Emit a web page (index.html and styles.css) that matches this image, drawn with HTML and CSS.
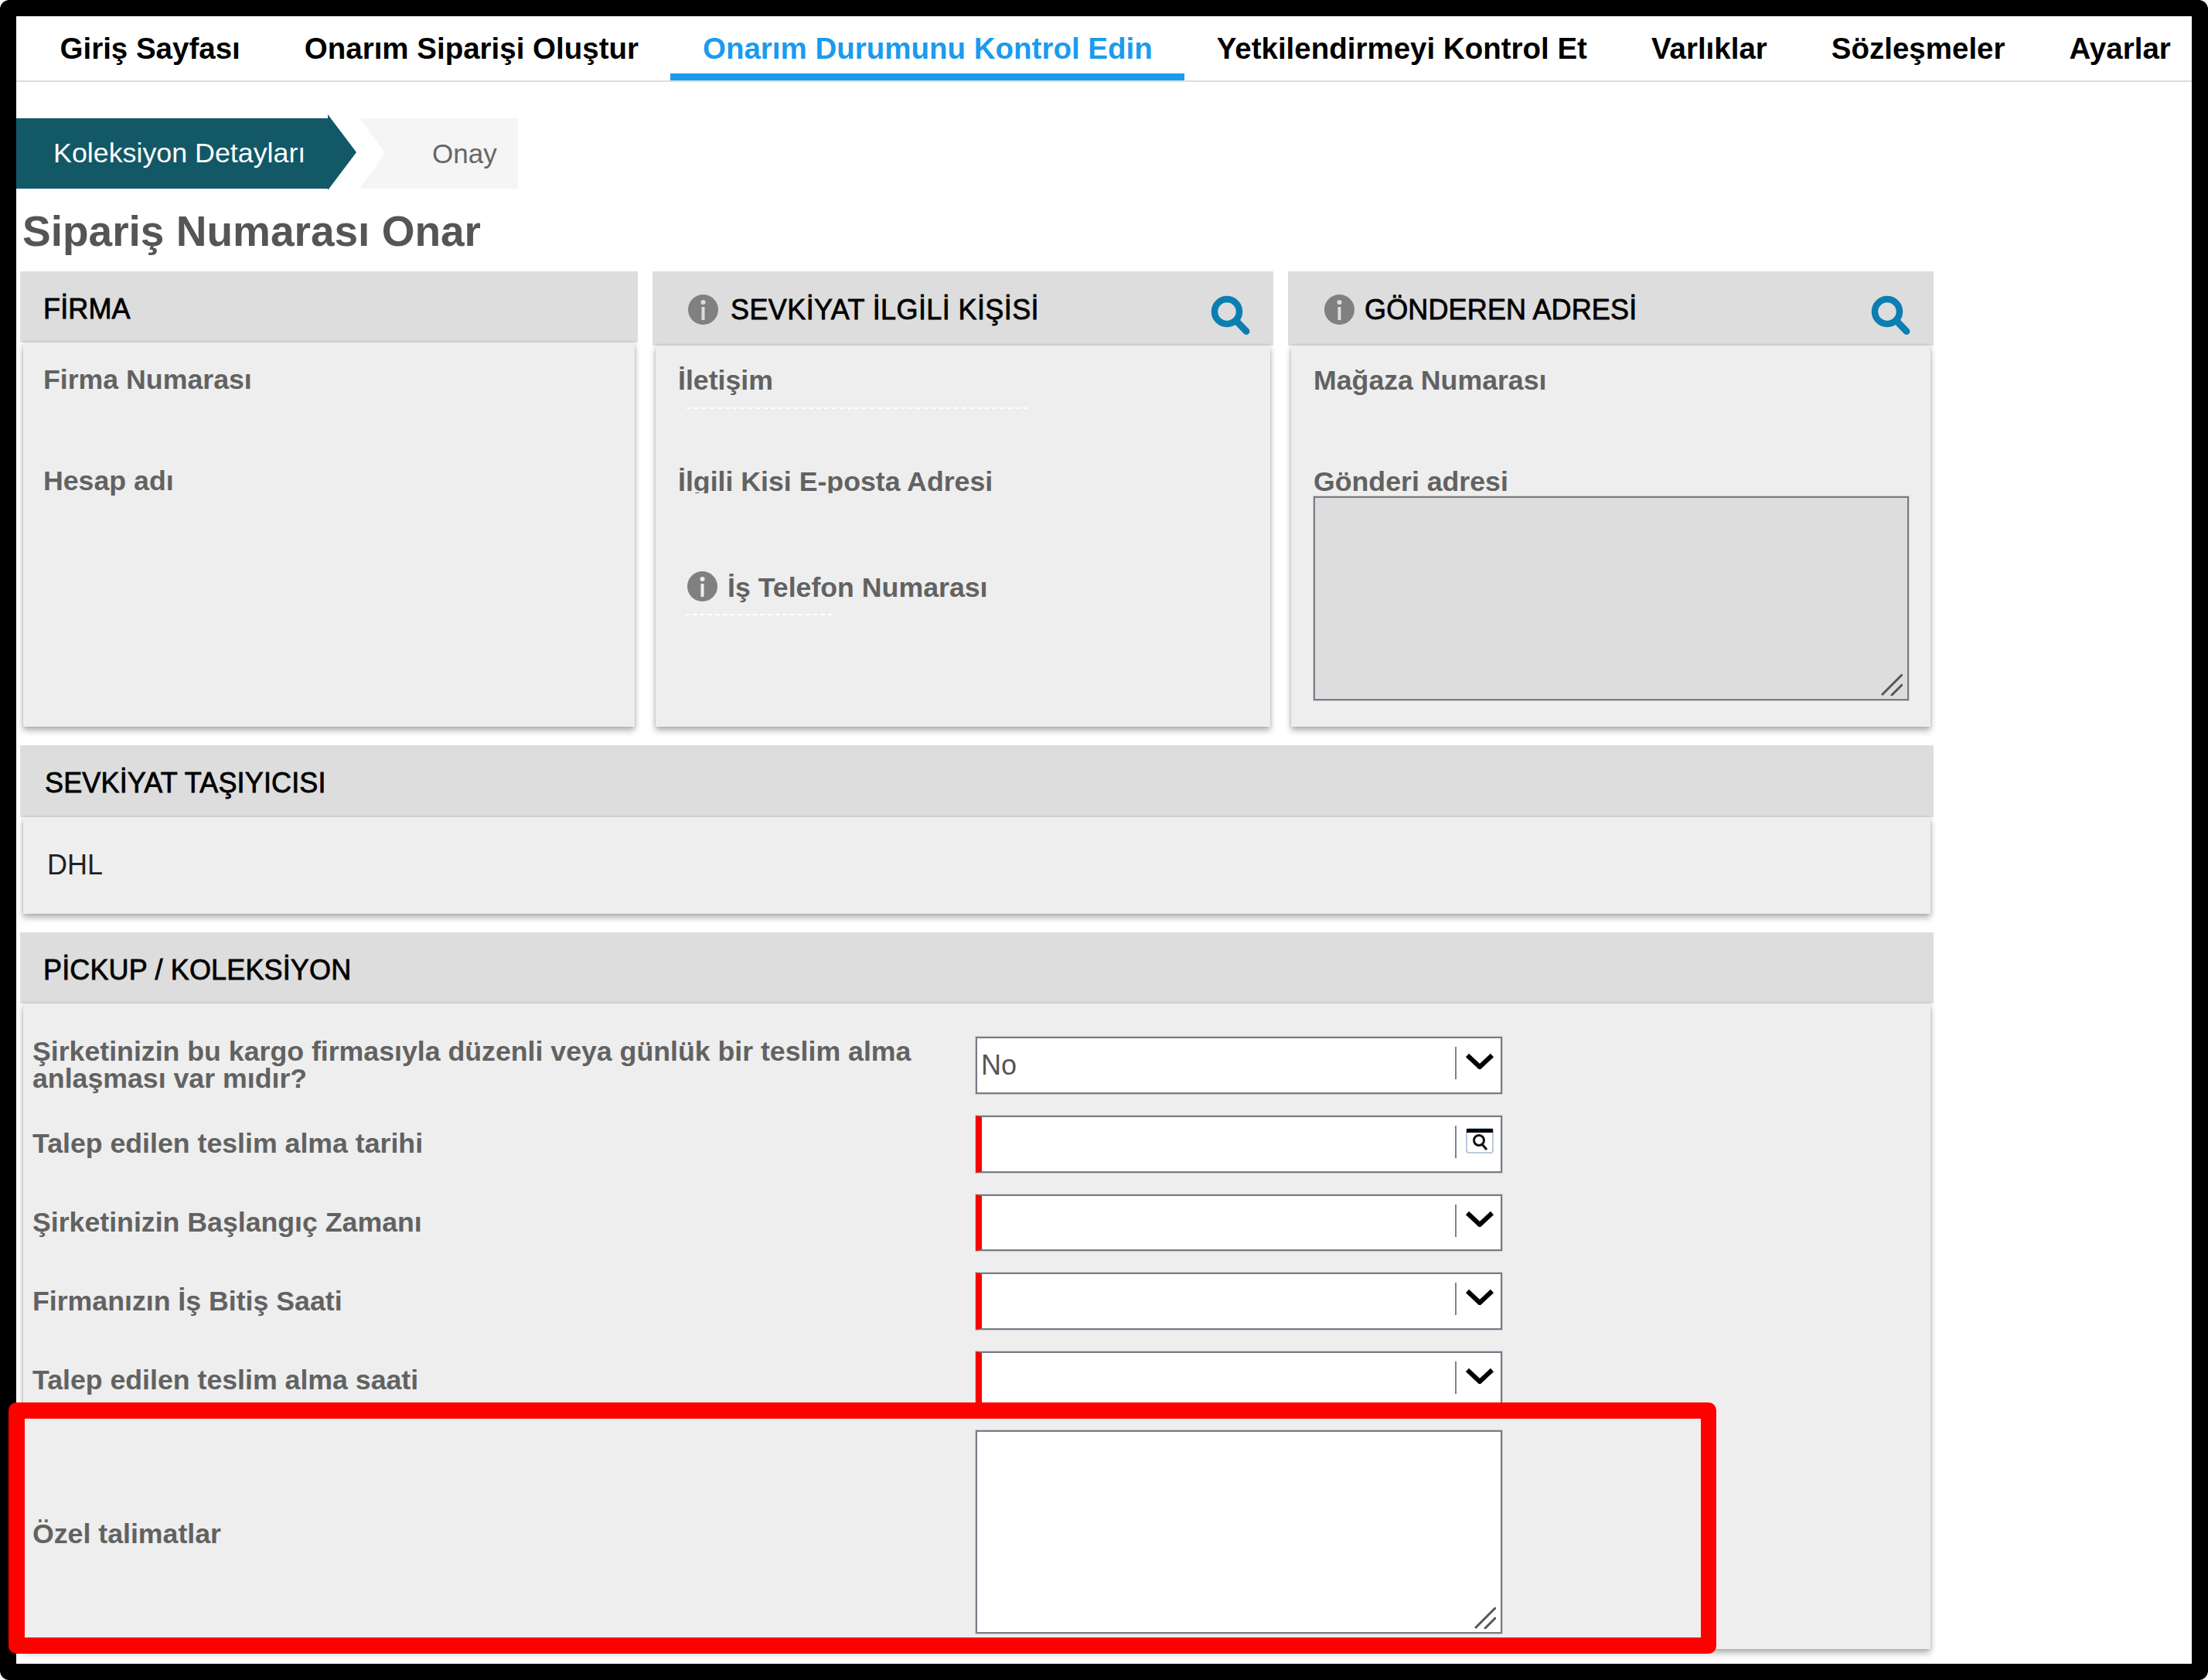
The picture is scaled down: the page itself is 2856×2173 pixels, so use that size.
FILE: index.html
```html
<!DOCTYPE html>
<html lang="tr">
<head>
<meta charset="utf-8">
<title>Sipariş Numarası Onar</title>
<link rel="stylesheet" href="styles.css">
</head>
<body>
<div class="frame">
  <nav class="nav">
    <a class="nav-item">Giriş Sayfası</a>
    <a class="nav-item">Onarım Siparişi Oluştur</a>
    <a class="nav-item active">Onarım Durumunu Kontrol Edin</a>
    <a class="nav-item">Yetkilendirmeyi Kontrol Et</a>
    <a class="nav-item">Varlıklar</a>
    <a class="nav-item">Sözleşmeler</a>
    <a class="nav-item">Ayarlar</a>
  </nav>

  <div class="steps">
    <div class="step step-current">Koleksiyon Detayları</div>
    <div class="step step-next">Onay</div>
  </div>

  <h1 class="title">Sipariş Numarası Onar</h1>

  <div class="panels">
    <div class="top-row">
      <section class="panel">
        <header class="head head-firm"><span class="head-text">FİRMA</span></header>
        <div class="body body-firm">
          <div class="field"><div class="label">Firma Numarası</div></div>
          <div class="field"><div class="label">Hesap adı</div></div>
        </div>
      </section>

      <section class="panel">
        <header class="head head-contact">
          <svg class="info" viewBox="0 0 39 39"><ellipse cx="19.5" cy="19.5" rx="19.5" ry="19.5" fill="#808080"/><circle cx="19.5" cy="10" r="3" fill="#ddd"/><rect x="17.5" y="16" width="4" height="17" fill="#ddd"/></svg>
          <span class="head-text head-text-wide">SEVKİYAT İLGİLİ KİŞİSİ</span>
          <svg class="search" viewBox="0 0 52 52"><circle cx="22" cy="22" r="16" fill="none" stroke="#0b7eb2" stroke-width="8.5"/><path d="M34 34 L47 47.5" stroke="#0b7eb2" stroke-width="9" stroke-linecap="round"/></svg>
        </header>
        <div class="body body-contact">
          <div class="field">
            <div class="label">İletişim</div>
            <div class="redact redact-long"></div>
          </div>
          <div class="field field-tall"><div class="label label-clipped">İlgili Kisi E-posta Adresi</div></div>
          <div class="field">
            <div class="label label-icon">
              <svg class="info" viewBox="0 0 39 39"><ellipse cx="19.5" cy="19.5" rx="19.5" ry="19.5" fill="#808080"/><circle cx="19.5" cy="10" r="3" fill="#eee"/><rect x="17.5" y="16" width="4" height="17" fill="#eee"/></svg>
              <span>İş Telefon Numarası</span>
            </div>
            <div class="redact redact-short"></div>
          </div>
        </div>
      </section>

      <section class="panel">
        <header class="head head-contact head-sender">
          <svg class="info" viewBox="0 0 39 39"><ellipse cx="19.5" cy="19.5" rx="19.5" ry="19.5" fill="#808080"/><circle cx="19.5" cy="10" r="3" fill="#ddd"/><rect x="17.5" y="16" width="4" height="17" fill="#ddd"/></svg>
          <span class="head-text">GÖNDEREN ADRESİ</span>
          <svg class="search" viewBox="0 0 52 52"><circle cx="22" cy="22" r="16" fill="none" stroke="#0b7eb2" stroke-width="8.5"/><path d="M34 34 L47 47.5" stroke="#0b7eb2" stroke-width="9" stroke-linecap="round"/></svg>
        </header>
        <div class="body body-sender">
          <div class="field"><div class="label">Mağaza Numarası</div></div>
          <div class="label label-tight">Gönderi adresi</div>
          <div class="area area-disabled">
            <svg class="grip" viewBox="0 0 28 28"><path d="M27 1 L2 26 M27 14 L14 27" stroke="#555" stroke-width="3" stroke-linecap="round"/></svg>
          </div>
        </div>
      </section>
    </div>

    <section class="panel">
      <header class="head head-carrier"><span class="head-text">SEVKİYAT TAŞIYICISI</span></header>
      <div class="body body-carrier">DHL</div>
    </section>

    <section class="panel">
      <header class="head head-firm"><span class="head-text">PİCKUP / KOLEKSİYON</span></header>
      <div class="body body-form">
        <div class="row">
          <div class="label row-label">Şirketinizin bu kargo firmasıyla düzenli veya günlük bir teslim alma anlaşması var mıdır?</div>
          <div class="input">
            <span class="value">No</span>
            <span class="sep"></span>
            <svg class="chevron" viewBox="0 0 38 21"><path d="M3 3 L19 18 L35 3" fill="none" stroke="#000" stroke-width="6"/></svg>
          </div>
        </div>
        <div class="row">
          <div class="label row-label">Talep edilen teslim alma tarihi</div>
          <div class="input required">
            <span class="value"></span>
            <span class="sep"></span>
            <svg class="calendar" viewBox="0 0 36 33"><rect x="1" y="1" width="34" height="31" rx="3" fill="#fff" stroke="#b9cbdc" stroke-width="2"/><rect x="1" y="1" width="34" height="5" fill="#000"/><circle cx="17" cy="16" r="6.5" fill="none" stroke="#111" stroke-width="3"/><path d="M21 21 L27 28" stroke="#111" stroke-width="3"/></svg>
          </div>
        </div>
        <div class="row">
          <div class="label row-label">Şirketinizin Başlangıç Zamanı</div>
          <div class="input required">
            <span class="value"></span>
            <span class="sep"></span>
            <svg class="chevron" viewBox="0 0 38 21"><path d="M3 3 L19 18 L35 3" fill="none" stroke="#000" stroke-width="6"/></svg>
          </div>
        </div>
        <div class="row">
          <div class="label row-label">Firmanızın İş Bitiş Saati</div>
          <div class="input required">
            <span class="value"></span>
            <span class="sep"></span>
            <svg class="chevron" viewBox="0 0 38 21"><path d="M3 3 L19 18 L35 3" fill="none" stroke="#000" stroke-width="6"/></svg>
          </div>
        </div>
        <div class="row">
          <div class="label row-label">Talep edilen teslim alma saati</div>
          <div class="input required">
            <span class="value"></span>
            <span class="sep"></span>
            <svg class="chevron" viewBox="0 0 38 21"><path d="M3 3 L19 18 L35 3" fill="none" stroke="#000" stroke-width="6"/></svg>
          </div>
        </div>
        <div class="row row-area">
          <div class="label row-label label-low">Özel talimatlar</div>
          <div class="area area-notes">
            <svg class="grip" viewBox="0 0 28 28"><path d="M27 1 L2 26 M27 14 L14 27" stroke="#555" stroke-width="3" stroke-linecap="round"/></svg>
          </div>
        </div>
      </div>
    </section>
  </div>

  <div class="highlight"></div>
</div>
</body>
</html>
```
FILE: styles.css
```css
* { box-sizing: border-box; }
html, body { margin: 0; background: #fff; }
body { font-family: "Liberation Sans", Arial, sans-serif; }

.frame {
  position: relative;
  width: 2856px;
  height: 2173px;
  border: 21px solid #000;
  border-radius: 12px;
  background: #fff;
}

/* top navigation */
.nav {
  display: flex;
  height: 85px;
  padding-left: 15px;
  border-bottom: 2px solid #ddd;
}
.nav-item {
  height: 83px;
  padding: 0 41.5px;
  font-size: 38.5px;
  font-weight: 700;
  line-height: 83px;
  color: #000;
  white-space: nowrap;
}
.nav-item.active {
  color: #1a9bef;
  border-bottom: 9px solid #1a9bef;
}

/* wizard steps */
.steps {
  display: flex;
  gap: 4px;
  margin-top: 42px;
  height: 98px;
}
.step {
  line-height: 91px;
  white-space: nowrap;
}
.step-current {
  width: 440px;
  height: 98px;
  padding: 5px 0 0 48px;
  font-size: 35.8px;
  background: #135867;
  color: #fff;
  clip-path: polygon(0 5px, 403px 5px, 403px 0, 440px 49px, 403px 98px, 403px 96px, 0 96px);
}
.step-next {
  width: 205px;
  height: 91px;
  margin-top: 5px;
  padding-left: 94px;
  font-size: 35px;
  background: #f5f5f5;
  color: #666;
  clip-path: polygon(0 0, 205px 0, 205px 91px, 0 91px, 33px 45px);
}

.title {
  margin: 13px 0 12px;
  padding-left: 8px;
  font-size: 55px;
  font-weight: 700;
  line-height: 80px;
  color: #555;
}

/* panels */
.panels {
  display: flex;
  flex-direction: column;
  gap: 24px;
  width: 2475px;
  margin-left: 5px;
}
.top-row {
  display: grid;
  grid-template-columns: 799px 803px 835px;
  column-gap: 19px;
  height: 589px;
}
.panel {
  display: flex;
  flex-direction: column;
}
.head {
  display: flex;
  align-items: center;
  flex: none;
  background: #ddd;
}
.head-text {
  font-size: 36px;
  color: #000;
  white-space: nowrap;
  letter-spacing: 0.15px;
  -webkit-text-stroke: 0.8px #000;
}
.head-text-wide { letter-spacing: 0.4px; }
.head-firm {
  height: 92px;
  padding: 5px 0 0 30px;
}
.head-carrier {
  height: 93px;
  padding: 4px 0 0 32px;
}
.head-contact {
  height: 96px;
  padding: 3px 30px 0 46px;
  gap: 16px;
}
.head-sender {
  padding-left: 47px;
  gap: 13px;
}
.info {
  flex: none;
  width: 39px;
  height: 39px;
}
.search {
  flex: none;
  width: 52px;
  height: 52px;
  margin: 12px 0 0 auto;
}

.body {
  flex: 1;
  margin: 0 4px;
  background: #eee;
  box-shadow: 0 5px 8px rgba(0, 0, 0, 0.3), 0 0 4px rgba(0, 0, 0, 0.14);
}
.body-firm { padding: 28px 0 0 26px; }
.body-contact { padding: 25px 0 0 29px; }
.body-sender { padding: 25px 0 0 29px; }
.body-carrier {
  display: flex;
  align-items: center;
  flex: none;
  height: 125px;
  padding: 0 0 2px 31px;
  font-size: 36px;
  color: #222;
}
.body-form {
  display: flex;
  flex-direction: column;
  flex: none;
  gap: 28px;
  height: 835px;
  padding: 43px 0 0 12px;
}

.field { height: 131px; }
.field-tall { height: 137px; }
.label {
  font-size: 35.7px;
  font-weight: 700;
  line-height: 40px;
  color: #626262;
}
.label-clipped {
  height: 35px;
  overflow: hidden;
}
.label-tight { height: 39px; }
.label-icon {
  display: flex;
  align-items: center;
  gap: 13px;
  padding-left: 12px;
}
.label-icon .info { margin-top: -4px; }

.redact {
  border-top: 2px dashed #fff;
}
.redact-long {
  width: 441px;
  margin: 15px 0 0 11px;
}
.redact-short {
  width: 191px;
  margin: 14px 0 0 9px;
}

/* text areas */
.area {
  position: relative;
  border: 2px solid #767b85;
  box-shadow: 0 0 0 1px rgba(120, 125, 135, 0.25);
}
.area-disabled {
  width: 770px;
  height: 264px;
  background: #ddd;
}
.area-notes {
  flex: none;
  width: 681px;
  height: 263px;
  background: #fff;
}
.grip {
  position: absolute;
  right: 6px;
  bottom: 4px;
  width: 28px;
  height: 28px;
}

/* form rows */
.row {
  display: flex;
  align-items: center;
  flex: none;
  height: 73.8px;
}
.row-area { height: 263px; }
.row-label {
  flex: none;
  width: 1220px;
  padding: 1px 20px 0 0;
  line-height: 35.5px;
}
.label-low { padding-top: 7px; }

.input {
  display: flex;
  align-items: flex-start;
  flex: none;
  width: 681px;
  height: 100%;
  padding: 11px 8px 0 4px;
  border: 2px solid #767b85;
  background: #fff;
  box-shadow: 0 0 0 1px rgba(120, 125, 135, 0.25);
}
.input.required {
  padding-left: 0;
  border-left: 8px solid #f00;
}
.value {
  flex: 1;
  align-self: center;
  margin-top: -11px;
  padding-left: 1px;
  font-size: 36px;
  color: #555;
}
.sep {
  flex: none;
  width: 2px;
  height: 42px;
  margin-left: -1px;
  background: #7d828b;
}
.chevron {
  flex: none;
  width: 38px;
  height: 21px;
  margin: 8px 0 0 11px;
}
.calendar {
  flex: none;
  width: 36px;
  height: 33px;
  margin: 3px 1px 0 12px;
}

/* callout drawn over the screenshot */
.highlight {
  position: absolute;
  left: -10px;
  top: 1793px;
  width: 2209px;
  height: 325px;
  border: 21px solid #f00;
  border-right-width: 20px;
  border-radius: 10px;
}
```
